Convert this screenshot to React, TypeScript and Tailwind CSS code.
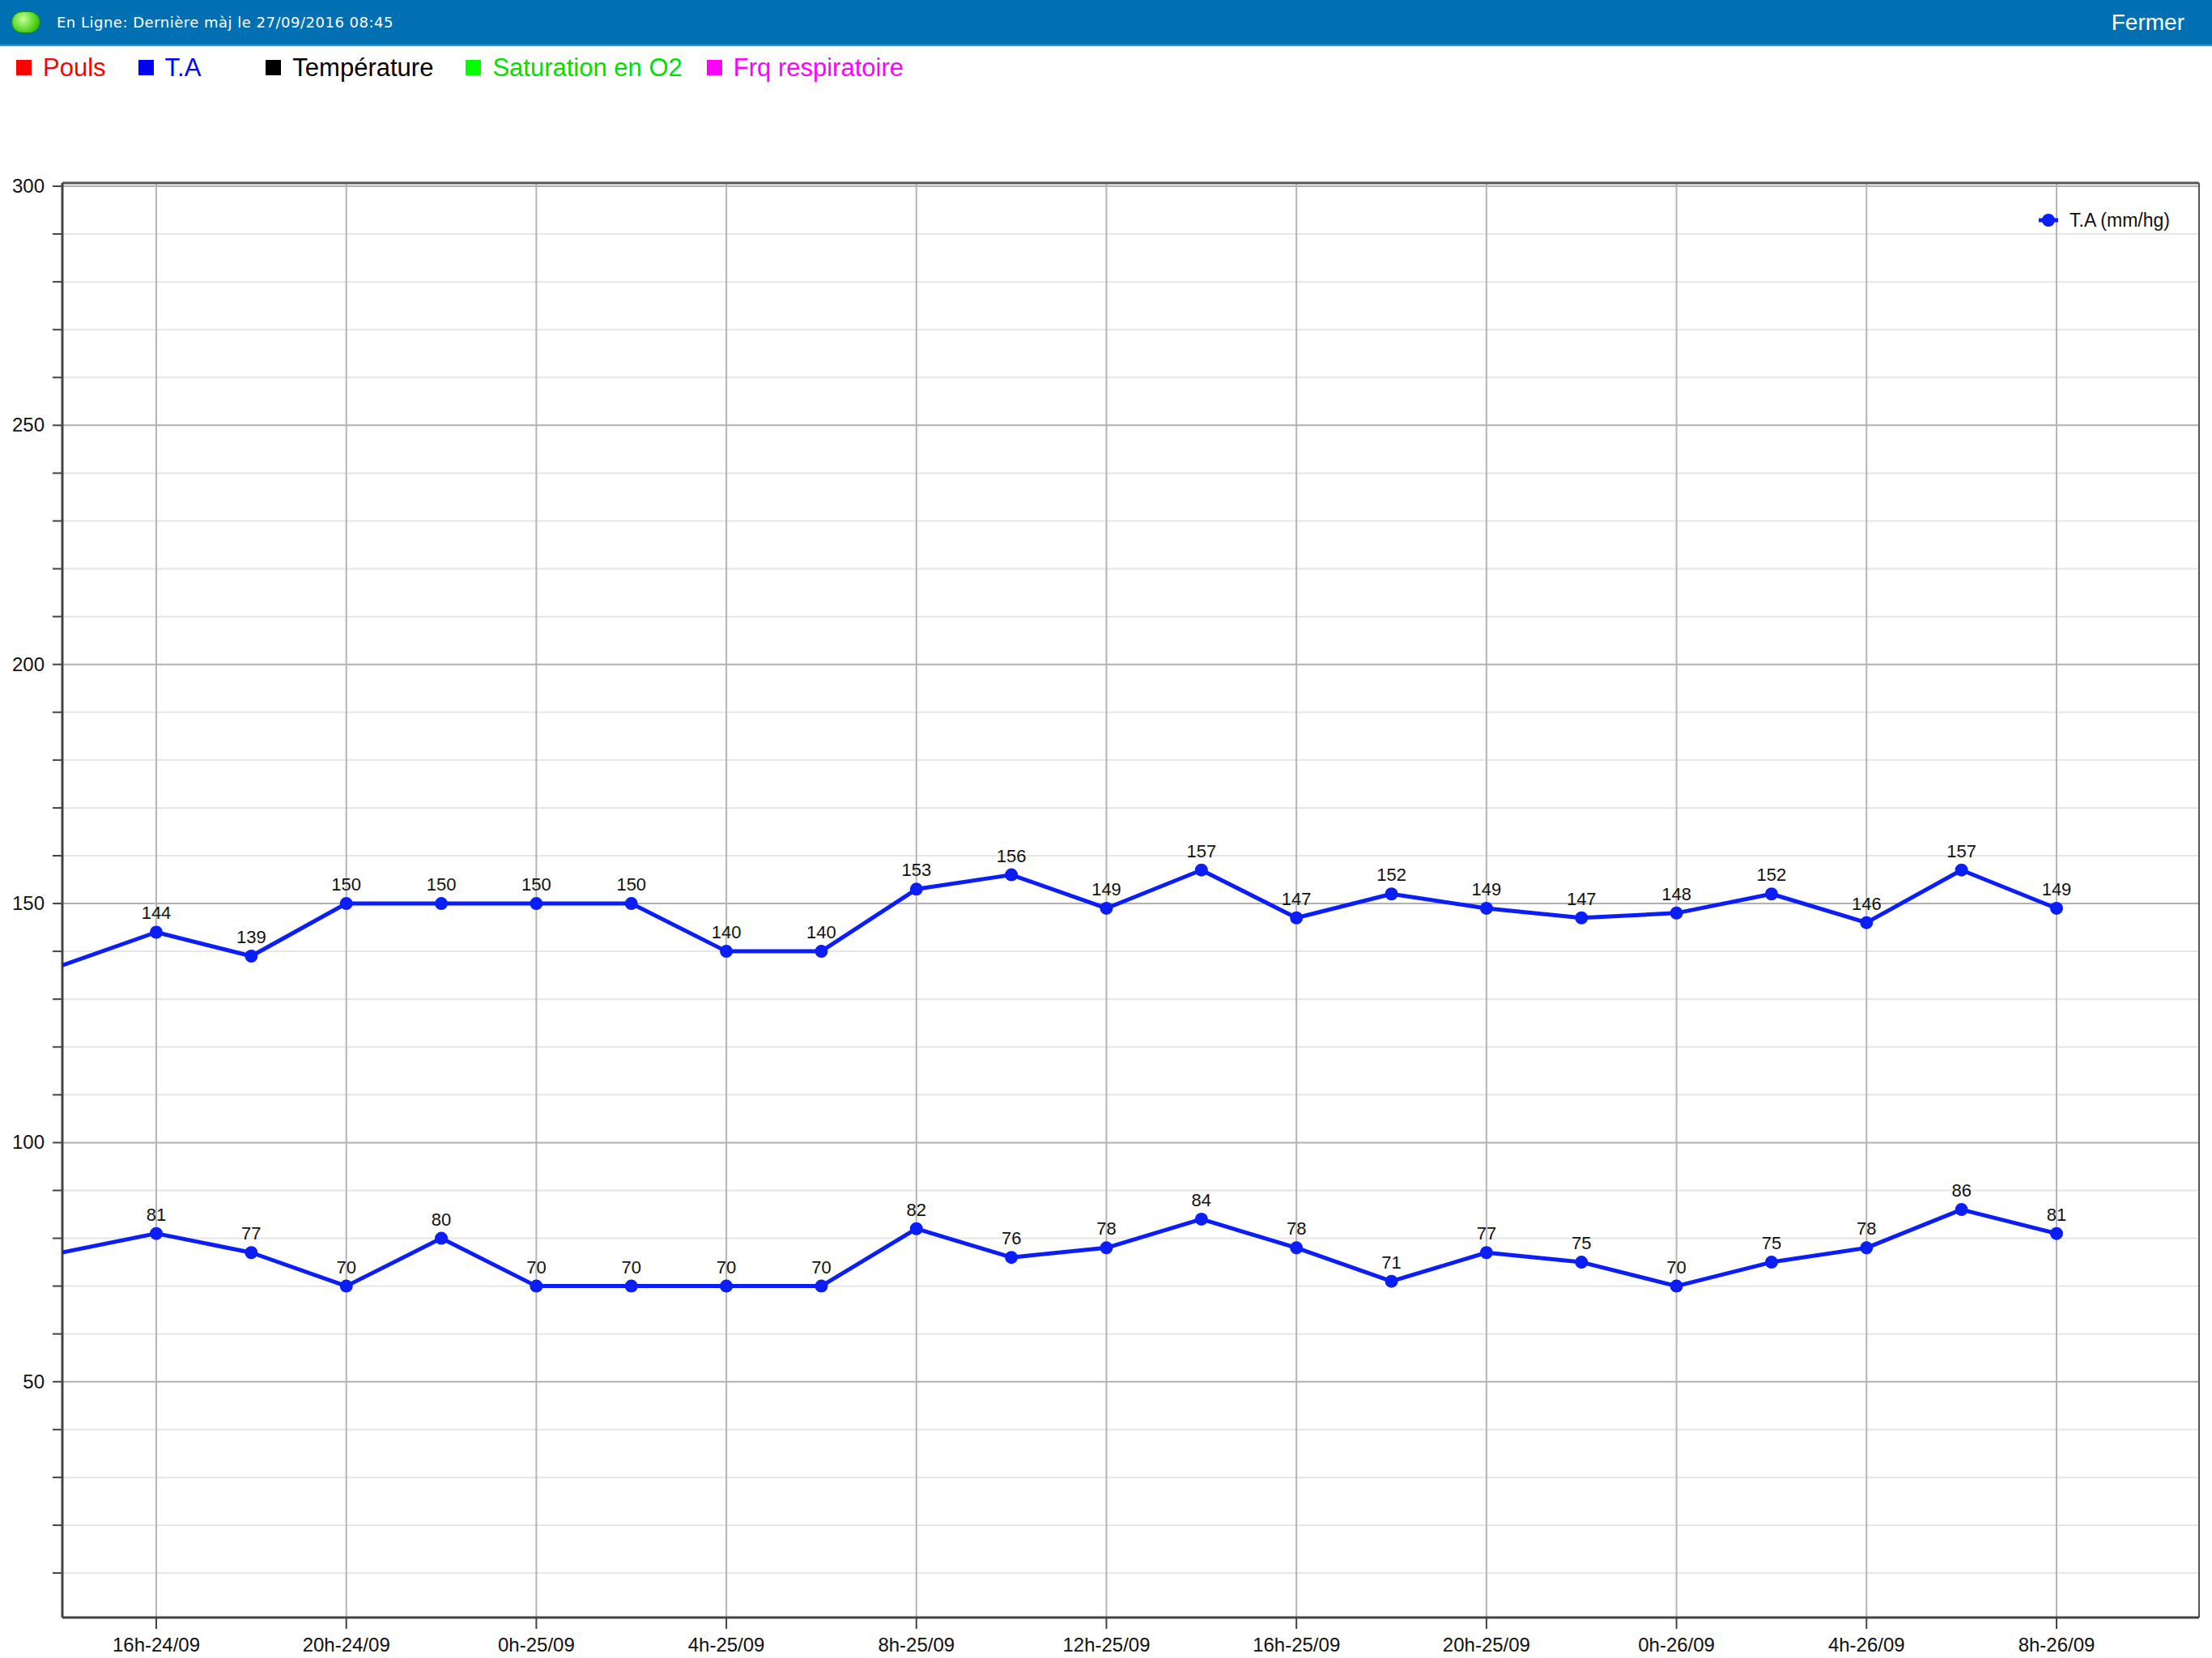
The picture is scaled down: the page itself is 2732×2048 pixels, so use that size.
import React from "react";

const upper = [137, 144, 139, 150, 150, 150, 150, 140, 140, 153, 156, 149, 157, 147, 152, 149, 147, 148, 152, 146, 157, 149];
const lower = [77, 81, 77, 70, 80, 70, 70, 70, 70, 82, 76, 78, 84, 78, 71, 77, 75, 70, 75, 78, 86, 81];
const xlabels = ["16h-24/09", "20h-24/09", "0h-25/09", "4h-25/09", "8h-25/09", "12h-25/09", "16h-25/09", "20h-25/09", "0h-26/09", "4h-26/09", "8h-26/09"];

const OFF = 110;
const L = 77, R = 2716, T = 226 - OFF, B = 1998 - OFF;
const X0 = 193, STEP = 117.35;
const xi = (i: number) => X0 + (i - 1) * STEP;
const yv = (v: number) => 230 - OFF + (300 - v) * 5.907;

function Series({ data }: { data: number[] }) {
  const pts = data.map((v, i) => `${xi(i)},${yv(v)}`).join(" ");
  return (
    <g>
      <polyline points={pts} fill="none" stroke="#0a1ef5" strokeWidth={5} strokeLinejoin="round" />
      {data.map((v, i) =>
        i === 0 ? null : (
          <g key={i}>
            <circle cx={xi(i)} cy={yv(v)} r={8} fill="#0a1ef5" />
            <text x={xi(i)} y={yv(v) - 16} textAnchor="middle" fontSize={22} fill="#111">{v}</text>
          </g>
        )
      )}
    </g>
  );
}

export default function App() {
  const minor: number[] = [];
  for (let v = 10; v <= 300; v += 10) minor.push(v);
  return (
    <div className="w-[2732px] h-[2048px] bg-white overflow-hidden" style={{ fontFamily: '"Liberation Sans", Arial, sans-serif' }}>
      <div className="h-[57px] bg-[#0070b3] border-b-2 border-[#3a8fd0] flex items-center justify-between pl-[14px] pr-[34px]">
        <div className="flex items-center gap-[20px]">
          <div className="w-[36px] h-[27px] rounded-full bg-[radial-gradient(circle_at_40%_35%,#c6ff9a,#4fd21c_60%,#2a9a10)] border border-[#1f8a10]" />
          <span className="text-white text-[18px] tracking-[0.5px]" style={{ fontFamily: '"DejaVu Sans", sans-serif' }}>En Ligne: Dernière màj le 27/09/2016 08:45</span>
        </div>
        <span className="text-white text-[28px]">Fermer</span>
      </div>
      <div className="h-[53px] flex items-center pl-[20px] text-[31px] leading-none">
        <span className="flex items-center gap-[14px] text-[#ff0000] mr-[40px]"><span className="w-[19px] h-[19px] bg-[#ff0000]" />Pouls</span>
        <span className="flex items-center gap-[14px] text-[#0000ff] mr-[80px]"><span className="w-[19px] h-[19px] bg-[#0000ff]" />T.A</span>
        <span className="flex items-center gap-[14px] text-black mr-[40px]"><span className="w-[19px] h-[19px] bg-black" />Température</span>
        <span className="flex items-center gap-[14px] text-[#00e000] mr-[30px]"><span className="w-[19px] h-[19px] bg-[#00ff00]" />Saturation en O2</span>
        <span className="flex items-center gap-[14px] text-[#ff00ff]"><span className="w-[19px] h-[19px] bg-[#ff00ff]" />Frq respiratoire</span>
      </div>
      <svg width={2732} height={1938} viewBox="0 0 2732 1938" className="block" style={{ fontFamily: '"Liberation Sans", Arial, sans-serif' }}>
        {minor.map((v) => (
          <g key={v}>
            <line x1={L} x2={R} y1={yv(v)} y2={yv(v)} stroke={v % 50 === 0 ? "#b0b0b0" : "#e6e6e6"} strokeWidth={2} />
            <line x1={L - 12} x2={L} y1={yv(v)} y2={yv(v)} stroke="#444" strokeWidth={2} />
            {v % 50 === 0 && <text x={L - 22} y={yv(v) + 8} textAnchor="end" fontSize={24} fill="#111">{v}</text>}
          </g>
        ))}
        {xlabels.map((lb, k) => {
          const x = X0 + k * 2 * STEP;
          return (
            <g key={lb}>
              <line x1={x} x2={x} y1={T} y2={B} stroke="#b5b5b5" strokeWidth={2} />
              <line x1={x} x2={x} y1={B} y2={B + 14} stroke="#444" strokeWidth={2} />
              <text x={x} y={B + 42} textAnchor="middle" fontSize={24} fill="#111">{lb}</text>
            </g>
          );
        })}
        <line x1={L} x2={R} y1={T} y2={T} stroke="#555" strokeWidth={3} />
        <line x1={R} x2={R} y1={T} y2={B} stroke="#555" strokeWidth={2} />
        <line x1={L} x2={L} y1={T} y2={B} stroke="#444" strokeWidth={3} />
        <line x1={L} x2={R} y1={B} y2={B} stroke="#444" strokeWidth={3} />
        <svg x={0} y={0} width={2732} height={1938} overflow="hidden">
          <clipPath id="plot"><rect x={L} y={T} width={R - L} height={B - T} /></clipPath>
          <g clipPath="url(#plot)">
            <Series data={upper} />
            <Series data={lower} />
          </g>
        </svg>
        <line x1={2518} x2={2542} y1={272 - OFF} y2={272 - OFF} stroke="#0a1ef5" strokeWidth={5} />
        <circle cx={2530} cy={272 - OFF} r={8} fill="#0a1ef5" />
        <text x={2556} y={272 - OFF + 8} fontSize={23} fill="#111">T.A (mm/hg)</text>
      </svg>
    </div>
  );
}
